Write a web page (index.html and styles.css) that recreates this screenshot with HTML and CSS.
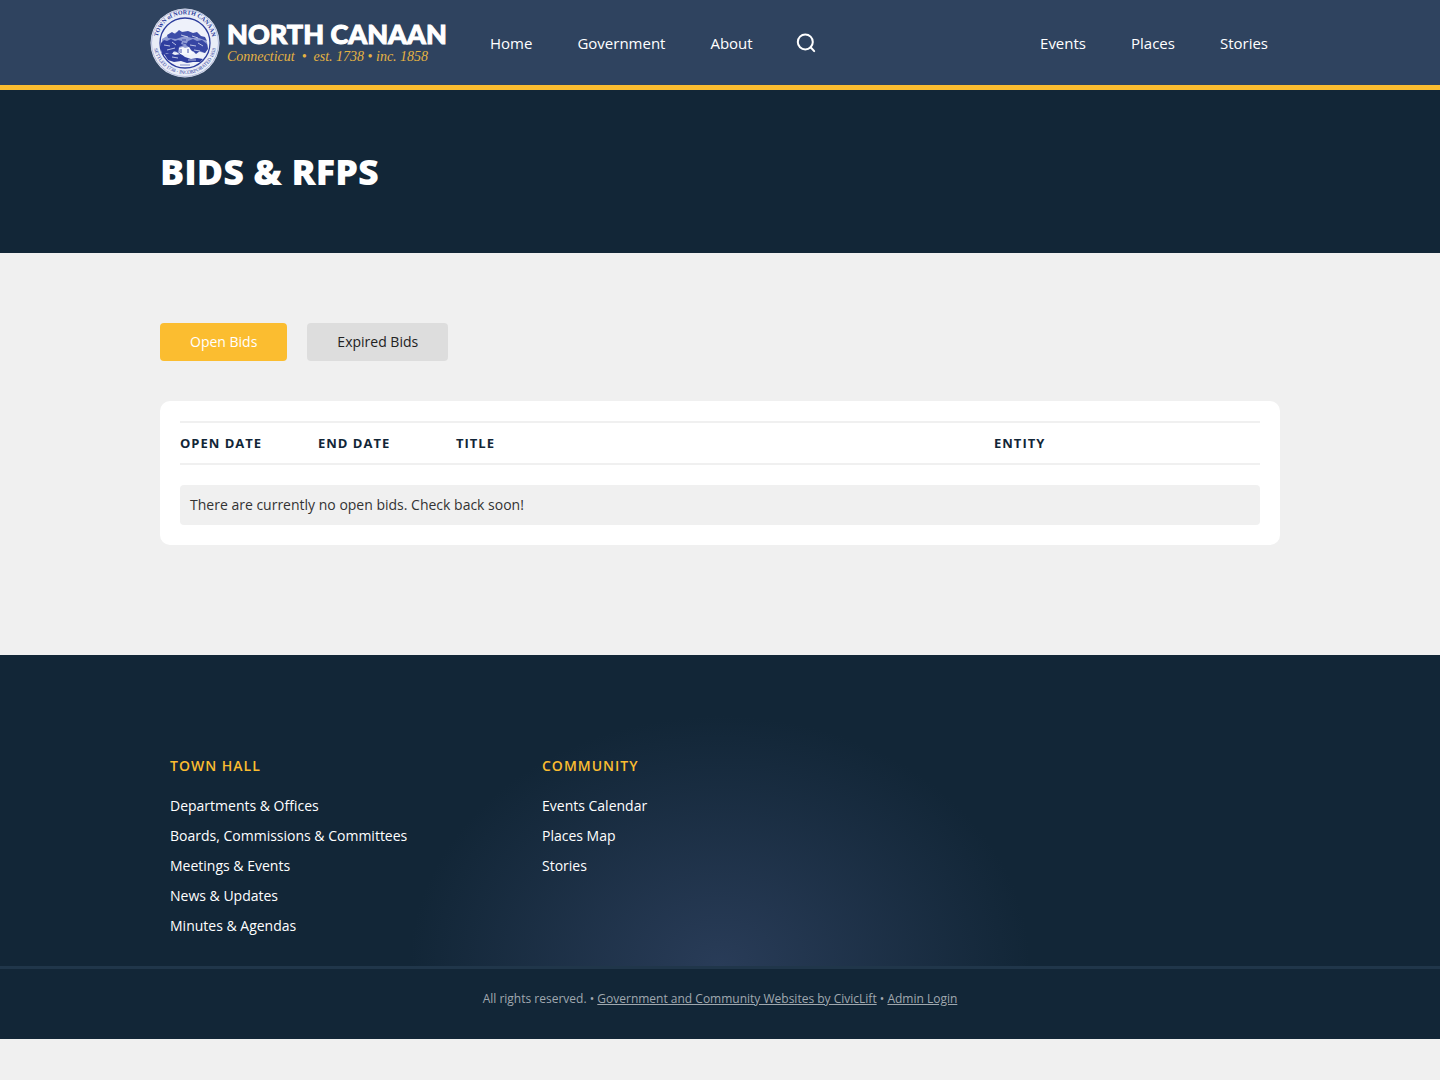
FILE: index.html
```html
<!DOCTYPE html>
<html lang="en">
<head>
    <meta charset="UTF-8">
    <meta name="viewport" content="width=device-width, initial-scale=1.0">
    <title>Bids &amp; RFPs</title>
    <link rel="stylesheet" href="styles.css">
</head>
<body>
<header class="site-header">
    <div class="header-inner">
        <a class="logo" href="#">
            <svg class="seal" viewBox="0 0 70 70" aria-hidden="true">
                <defs>
                    <path id="ring-top" d="M8 39 A27.5 27.5 0 1 1 62 39"/>
                    <path id="ring-bottom" d="M3.6 32 A31.5 31.5 0 1 0 66.4 32"/>
                </defs>
                <circle cx="35" cy="35" r="34.5" fill="#e9edf7"/>
                <circle cx="35" cy="35" r="33.5" fill="none" stroke="#8f9bca" stroke-width="0.6"/>
                <circle cx="35" cy="35" r="25" fill="#eef1fa" stroke="#2c3c9c" stroke-width="1.3"/>
                <text class="seal-top"><textPath href="#ring-top" startOffset="50%" text-anchor="middle">TOWN of NORTH CANAAN</textPath></text>
                <text class="seal-bottom"><textPath href="#ring-bottom" startOffset="50%" text-anchor="middle">SETTLED 1738 · INCORPORATED 1858</textPath></text>
                <!-- hills, trees and meadow -->
                <path d="M12 31 q4-3 9-4 q6-4 13-3 q7 0 12 3 q8 1 11 7 l1 6 -3 5 -9-2 -10 2 -14-1 -11 1z" fill="#8f9bd3"/>
                <path d="M17 27 l5-3 3 2 4-4 3 2 6-1 5 2 4-1 4 4 4 1 2 4 -8-3 -7 0 -7-2 -9 3 -8-1z" fill="#3d4da8"/>
                <path d="M11 35 l3-3 3 1 4-2 4 2 3-1 4 1 -1 3 3 1 -5 2 -1 5 -4-1 -2 3 -5-1 -4 2 -2-5z" fill="#2f3e9f"/>
                <path d="M38 33 l5-2 4 2 5-1 5 4 1 5 -3 4 -5-2 -4 3 -3-3 -4 1 1-4 -4-3z" fill="#3746a4"/>
                <path d="M14 46 l6-1 5 2 6-1 4 3 6 2 6-1 6 1 -3 3 -7 0 -6 1 -6-2 -7 1 -6-2z" fill="#2f3e9f"/>
                <path d="M29 40 l4-1 2 1 4-1 2 3 3 3 -4 2 -4-1 -4 1 -2-3z" fill="#f6f8fd"/>
                <path d="M14 37 l6 1 M17 42 l8-2 M22 34 l4 3 M40 37 l6 1 M44 42 l6 1 M48 35 l5 3 M22 49 l6 1 M38 52 l8 0 M31 27 l7 2 M42 28 l6 2" stroke="#dfe4f5" stroke-width="0.8" fill="none"/>
                <path d="M31 41 v4 M38 41 v4 M26 43 l4 3 M33 35 l4 1 M32 32 l4 0" stroke="#3746a4" stroke-width="0.9" fill="none"/>
                <path d="M30 57 h10" stroke="#5262b4" stroke-width="0.7" fill="none"/>
            </svg>
            <span class="logo-text">
                <span class="logo-name">NORTH CANAAN</span>
                <span class="logo-tagline">Connecticut &nbsp;•&nbsp; est. 1738 • inc. 1858</span>
            </span>
        </a>
        <nav class="main-nav" aria-label="Main">
            <a href="#">Home</a>
            <a href="#">Government</a>
            <a href="#">About</a>
            <button class="search-button" type="button" aria-label="Search">
                <svg viewBox="0 0 20 20" aria-hidden="true">
                    <circle cx="9.3" cy="8.9" r="7.5"/>
                    <path d="M14.6 14.3 L18.2 18.1"/>
                </svg>
            </button>
        </nav>
        <nav class="side-nav" aria-label="Community">
            <a href="#">Events</a>
            <a href="#">Places</a>
            <a href="#">Stories</a>
        </nav>
    </div>
</header>

<section class="page-title">
    <div class="container">
        <h1>Bids &amp; RFPs</h1>
    </div>
</section>

<main class="container content">
    <div class="tabs">
        <button class="tab active" type="button">Open Bids</button>
        <button class="tab" type="button">Expired Bids</button>
    </div>
    <div class="card">
        <table class="bids">
            <thead>
                <tr>
                    <th class="col-date">Open Date</th>
                    <th class="col-date">End Date</th>
                    <th>Title</th>
                    <th class="col-entity">Entity</th>
                </tr>
            </thead>
        </table>
        <p class="notice">There are currently no open bids. Check back soon!</p>
    </div>
</main>

<footer class="site-footer">
    <div class="footer-top">
        <div class="container footer-columns">
            <div>
                <h2>Town Hall</h2>
                <ul>
                    <li><a href="#">Departments &amp; Offices</a></li>
                    <li><a href="#">Boards, Commissions &amp; Committees</a></li>
                    <li><a href="#">Meetings &amp; Events</a></li>
                    <li><a href="#">News &amp; Updates</a></li>
                    <li><a href="#">Minutes &amp; Agendas</a></li>
                </ul>
            </div>
            <div>
                <h2>Community</h2>
                <ul>
                    <li><a href="#">Events Calendar</a></li>
                    <li><a href="#">Places Map</a></li>
                    <li><a href="#">Stories</a></li>
                </ul>
            </div>
        </div>
    </div>
    <p class="footer-bottom">All rights reserved. • <a href="#">Government and Community Websites by CivicLift</a> • <a href="#">Admin Login</a></p>
</footer>
</body>
</html>
```

FILE: styles.css
```css
* {
    box-sizing: border-box;
}
body {
    margin: 0;
    font-family: "Open Sans", sans-serif;
    font-size: 14px;
    line-height: 20px;
    color: #333333;
    background-color: #f0f0f0;
}
a {
    color: inherit;
    text-decoration: none;
}
button {
    font: inherit;
    border: none;
    cursor: pointer;
}
.container {
    max-width: 1160px;
    margin: 0 auto;
    padding: 0 20px;
}

/* header */
.site-header {
    background-color: #2f435f;
    border-bottom: 5px solid #fbbd30;
    color: #ffffff;
}
.header-inner {
    display: flex;
    align-items: center;
    max-width: 1140px;
    min-height: 85px;
    margin: 0 auto;
}
.logo {
    display: flex;
    align-items: center;
    gap: 7px;
    width: 300px;
}
.seal {
    flex-shrink: 0;
    width: 70px;
    height: 70px;
}
.seal-top, .seal-bottom {
    font-family: "Liberation Serif", serif;
    fill: #2c3c9c;
}
.seal-top {
    font-size: 6px;
    font-weight: bold;
}
.seal-bottom {
    font-size: 5px;
}
.logo-text {
    display: flex;
    flex-direction: column;
    padding-top: 1px;
    white-space: nowrap;
}
.logo-name {
    font-family: Lato, sans-serif;
    font-size: 27px;
    font-weight: 900;
    line-height: 26px;
    -webkit-text-stroke: 1px #ffffff;
}
.logo-tagline {
    font-family: "Liberation Serif", serif;
    font-size: 14px;
    font-style: italic;
    line-height: 19px;
    color: #e6b342;
}
.main-nav, .side-nav {
    display: flex;
    align-items: center;
    gap: 45px;
    font-size: 15px;
}
.main-nav {
    margin-left: 40px;
}
.side-nav {
    margin-left: auto;
    padding-right: 22px;
}
.search-button {
    display: flex;
    padding: 0;
    background: none;
    color: #ffffff;
}
.search-button svg {
    width: 20px;
    height: 20px;
    margin-left: -2px;
    fill: none;
    stroke: currentColor;
    stroke-width: 2;
    stroke-linecap: round;
}

/* page title */
.page-title {
    padding: 57px 0 56px;
    background-color: #122637;
    color: #ffffff;
}
.page-title h1 {
    margin: 0;
    font-size: 36px;
    font-weight: 800;
    line-height: 50px;
    text-transform: uppercase;
}

/* bids */
.content {
    padding-top: 70px;
    padding-bottom: 110px;
}
.tabs {
    display: flex;
    gap: 20px;
    margin-bottom: 40px;
}
.tab {
    padding: 9px 30px;
    border-radius: 4px;
    background-color: #dddddd;
    color: #222222;
}
.tab.active {
    background-color: #fbbd30;
    color: #ffffff;
}
.card {
    padding: 20px;
    border-radius: 10px;
    background-color: #ffffff;
}
.bids {
    width: 100%;
    border-collapse: separate;
    border-spacing: 0;
    table-layout: fixed;
}
.bids th {
    padding: 10px 0;
    border-top: 2px solid #f0f0f0;
    border-bottom: 2px solid #f0f0f0;
    font-size: 13px;
    font-weight: 700;
    letter-spacing: 1px;
    text-align: left;
    text-transform: uppercase;
    color: #122637;
}
.bids .col-date {
    width: 138px;
}
.bids .col-entity {
    width: 266px;
}
.notice {
    margin: 20px 0 0;
    padding: 10px;
    border-radius: 4px;
    background-color: #f0f0f0;
}

/* footer */
.site-footer {
    background-color: #122637;
    color: #ffffff;
}
.footer-top {
    padding: 101px 0 25px;
    border-bottom: 3px solid #20364a;
    background-image: radial-gradient(ellipse 310px 250px at 50% 100%, #293c58, #122637);
}
.footer-columns {
    display: grid;
    grid-template-columns: repeat(3, 1fr);
    gap: 16px;
    padding: 0 30px;
}
.footer-columns h2 {
    margin: 0 0 15px;
    font-size: 14px;
    font-weight: 600;
    letter-spacing: 1px;
    text-transform: uppercase;
    color: #fbbd30;
}
.footer-columns ul {
    margin: 0;
    padding: 0;
    list-style: none;
}
.footer-columns li {
    line-height: 30px;
}
.footer-bottom {
    margin: 0;
    padding: 20px 20px 30px;
    font-size: 12px;
    text-align: center;
    color: #a0a8af;
}
.footer-bottom a {
    text-decoration: underline;
}
```
